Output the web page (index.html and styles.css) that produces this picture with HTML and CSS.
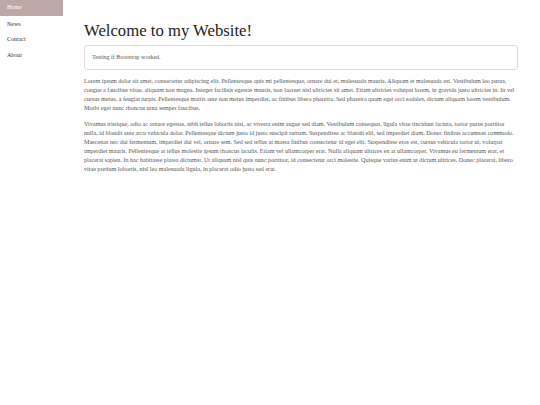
FILE: index.html
```html
<!DOCTYPE html>
<html>
<head>
<meta charset="utf-8">
<link rel="stylesheet" href="styles.css">
</head>
<body>
<nav class="sidebar">
  <a class="nav-item active" href="#">Home</a>
  <a class="nav-item" href="#">News</a>
  <a class="nav-item" href="#">Contact</a>
  <a class="nav-item" href="#">About</a>
</nav>
<main class="content">
  <h1 class="title">Welcome to my Website!</h1>
  <div class="card">Testing if Bootstrap worked.</div>
  <p class="para">Lorem ipsum dolor sit amet, consectetur adipiscing elit. Pellentesque quis mi pellentesque, ornare dui et, malesuada mauris. Aliquam et malesuada est. Vestibulum leo purus, congue a faucibus vitae, aliquam non magna. Integer facilisis egestas mauris, non laoreet nisl ultricies sit amet. Etiam ultricies volutpat lorem, in gravida justo ultricies in. In vel cursus metus, a feugiat turpis. Pellentesque mattis ante non metus imperdiet, ac finibus libero pharetra. Sed pharetra quam eget orci sodales, dictum aliquam lorem vestibulum. Morbi eget nunc rhoncus urna semper faucibus.</p>
  <p class="para">Vivamus tristique, odio ac ornare egestas, nibh tellus lobortis nisi, ac viverra enim augue sed diam. Vestibulum consequat, ligula vitae tincidunt lacinia, tortor purus porttitor nulla, id blandit ante arcu vehicula dolor. Pellentesque dictum justo id justo suscipit rutrum. Suspendisse ac blandit elit, sed imperdiet diam. Donec finibus accumsan commodo. Maecenas nec dui fermentum, imperdiet dui vel, ornare sem. Sed sed tellus at massa finibus consectetur id eget elit. Suspendisse eros est, cursus vehicula tortor ut, volutpat imperdiet mauris. Pellentesque at tellus molestie ipsum rhoncus iaculis. Etiam vel ullamcorper erat. Nulla aliquam ultrices ex at ullamcorper. Vivamus eu fermentum erat, et placerat sapien. In hac habitasse platea dictumst. Ut aliquam nisl quis nunc porttitor, id consectetur orci molestie. Quisque varius enim ut dictum ultrices. Donec placerat, libero vitae pretium lobortis, nisl leo malesuada ligula, in placerat odio justo sed erat.</p>
</main>
</body>
</html>
```
FILE: styles.css
```css
html, body {
  margin: 0;
  padding: 0;
  background: #fff;
}
body {
  display: flex;
  align-items: flex-start;
  font-family: "Liberation Serif", "Times New Roman", serif;
  color: #555;
}
.sidebar {
  width: 63px;
  flex: none;
  display: flex;
  flex-direction: column;
}
.nav-item {
  display: block;
  height: 15.6px;
  line-height: 15.6px;
  padding-left: 7px;
  font-size: 6px;
  color: #333;
  text-decoration: none;
}
.nav-item + .nav-item {
  height: 15.8px;
  line-height: 17.4px;
}
.nav-item.active {
  background: #bda7a7;
  color: #fff;
}
.content {
  flex: 1;
  padding: 0 22px 0 21px;
  min-width: 0;
}
.title {
  margin: 21px 0 5px;
  font-size: 16.7px;
  line-height: 19px;
  font-weight: normal;
  color: #222;
}
.card {
  border: 1px solid #dcdcdc;
  border-radius: 3px;
  padding: 7px 7px;
  font-size: 6px;
  line-height: 9px;
  color: #555;
  margin-bottom: 7px;
}
.para {
  margin: 0 0 6.5px;
  font-size: 6.1px;
  line-height: 9px;
  color: #555;
}
```
